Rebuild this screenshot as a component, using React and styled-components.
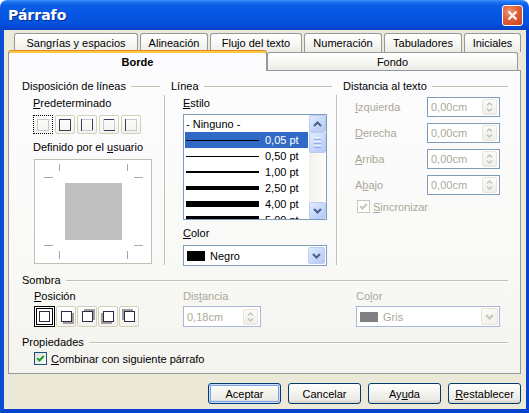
import React from "react";
import styled, { createGlobalStyle, css } from "styled-components";

const Global = createGlobalStyle`
  html, body { margin: 0; padding: 0; background: #ffffff; }
  body { font-family: "Liberation Sans", Arial, sans-serif; font-size: 11px; color: #000; }
  * { box-sizing: border-box; }
`;

const Window = styled.div`
  position: relative;
  width: 529px;
  height: 413px;
  display: flex;
  flex-direction: column;
  border-radius: 7px 7px 0 0;
  overflow: hidden;
`;

const TitleBar = styled.div`
  height: 30px;
  flex: none;
  display: flex;
  align-items: center;
  justify-content: space-between;
  padding: 0 6px 0 8px;
  background: linear-gradient(to bottom, #3d90fa 0px, #2276f2 2px, #0a5ee6 5px, #0657e3 14px, #0553df 22px, #0448d3 27px, #0a3fc4 30px);
`;

const Title = styled.div`
  font-family: "DejaVu Sans", Verdana, sans-serif;
  font-weight: bold;
  font-size: 14px;
  color: #fff;
  text-shadow: 1px 1px 0 #0a2f8c;
`;

const CloseButton = styled.div`
  width: 21px;
  height: 21px;
  border: 1px solid #fff;
  border-radius: 3px;
  background: radial-gradient(circle at 35% 30%, #f29a78 0%, #e2643c 40%, #c8401a 100%);
  display: flex;
  align-items: center;
  justify-content: center;
`;

const Frame = styled.div`
  flex: 1;
  display: flex;
  border-left: 4px solid #0a4ed8;
  border-right: 4px solid #0642cc;
  border-bottom: 4px solid #0642cc;
`;

const Body = styled.div`
  flex: 1;
  display: flex;
  flex-direction: column;
  background: #ece9d8;
  padding: 3px 5px 5px 4px;
`;

const TabRow = styled.div`
  display: flex;
  height: ${(p) => p.$h}px;
  padding-left: ${(p) => p.$indent}px;
  gap: ${(p) => p.$gap}px;
  align-items: flex-end;
  position: relative;
  z-index: ${(p) => p.$z};
`;

const Tab = styled.div`
  width: ${(p) => p.$w}px;
  height: 100%;
  border: 1px solid #919b9c;
  border-bottom: none;
  border-radius: 3px 3px 0 0;
  background: linear-gradient(to bottom, #ffffff 0%, #f7f7f4 50%, #ecebe5 100%);
  display: flex;
  align-items: center;
  justify-content: center;
  white-space: nowrap;
  ${(p) =>
    p.$active &&
    css`
      height: calc(100% + 3px);
      margin-top: -2px;
      margin-bottom: -1px;
      background: #fcfcfe;
      border-top: 1px solid #e68b2c;
      box-shadow: inset 0 2px 0 #ffc73c;
      font-weight: bold;
      padding-top: 1px;
    `}
`;

const Panel = styled.div`
  height: 304px;
  border: 1px solid #919b9c;
  background: linear-gradient(to bottom, #fcfcfe 0%, #f9f9f7 60%, #f4f3ee 100%);
  padding: 9px 12px 0 13px;
  display: flex;
  flex-direction: column;
  position: relative;
  z-index: 1;
`;

const SectionHead = styled.div`
  display: flex;
  align-items: center;
  height: 13px;
  line-height: 13px;
  white-space: nowrap;
  margin-top: ${(p) => p.$mt || 0}px;
  &::after {
    content: "";
    flex: 1;
    margin-left: 5px;
    border-top: 1px solid #c3c1b4;
    border-bottom: 1px solid #ffffff;
  }
`;

const TopGrid = styled.div`
  display: grid;
  grid-template-columns: 138px 11px 161px 11px 1fr;
`;

const VSep = styled.div`
  margin: 15px 0 1px 4px;
  width: 2px;
  border-left: 1px solid #c3c1b4;
  border-right: 1px solid #ffffff;
`;

const Column = styled.div`
  display: flex;
  flex-direction: column;
  align-items: flex-start;
`;

const Label = styled.div`
  height: 13px;
  line-height: 13px;
  white-space: nowrap;
  margin: ${(p) => p.$mt || 0}px 0 0 ${(p) => p.$ml || 0}px;
  color: ${(p) => (p.$disabled ? "#aca899" : "#000")};
`;

const U = styled.span`
  text-decoration: underline;
  text-underline-offset: 1px;
`;

const TileRow = styled.div`
  display: flex;
  gap: ${(p) => p.$gap}px;
  margin: ${(p) => p.$mt}px 0 0 ${(p) => p.$ml}px;
`;

const Tile = styled.div`
  width: ${(p) => p.$w}px;
  height: ${(p) => p.$h}px;
  border: 1px solid #d3cfbb;
  border-radius: 2px;
  background: linear-gradient(to bottom, #ffffff, #f3f2ec);
  display: flex;
  align-items: center;
  justify-content: center;
  ${(p) =>
    p.$focus &&
    css`
      border: 1px dotted #000;
      border-radius: 0;
    `}
  ${(p) =>
    p.$selected &&
    css`
      border: 1px solid #000;
      border-radius: 0;
      background: #fff;
      box-shadow: inset 0 0 0 1px #fff, inset 0 0 0 2px #000;
    `}
`;

const UserBox = styled.div`
  width: 118px;
  height: 105px;
  margin: 5px 0 0 1px;
  border: 1px solid #c2c0b3;
  background: #ffffff;
  display: flex;
`;

const ListBox = styled.div`
  width: 144px;
  height: 106px;
  margin: 4px 0 0 12px;
  border: 1px solid #7f9db9;
  background: #fff;
  display: flex;
  overflow: hidden;
`;

const ListArea = styled.div`
  flex: 1;
  padding: 1px;
  overflow: hidden;
`;

const ListRow = styled.div`
  height: 16px;
  display: flex;
  align-items: center;
  padding-left: 1px;
  white-space: nowrap;
  background: ${(p) => (p.$sel ? "#316ac5" : "transparent")};
  color: ${(p) => (p.$sel ? "#fff" : "#000")};
`;

const LineSample = styled.span`
  width: 73px;
  height: ${(p) => p.$t}px;
  background: #000;
  margin-right: 6px;
  flex: none;
`;

const ScrollBar = styled.div`
  width: 17px;
  display: flex;
  flex-direction: column;
  background: linear-gradient(to right, #f3f1ec, #fefefb);
`;

const ScrollBtn = styled.div`
  width: 17px;
  height: ${(p) => p.$h || 17}px;
  border: 1px solid #b8cbf3;
  border-radius: 2px;
  background: linear-gradient(135deg, #e3ecfe 0%, #c9d9fb 50%, #b5c9f5 100%);
  display: flex;
  flex-direction: column;
  align-items: center;
  justify-content: center;
  gap: 1px;
  flex: none;
  ${(p) =>
    p.$disabled &&
    css`
      border-color: #e6e4da;
      background: linear-gradient(135deg, #fbfbf8 0%, #f1f0ea 100%);
    `}
`;

const Spacer = styled.div`
  flex: 1;
`;

const Grip = styled.span`
  width: 7px;
  height: 1px;
  background: ${(p) => (p.$light ? "#eef4fe" : "#8cacee")};
`;

const Combo = styled.div`
  width: ${(p) => p.$w}px;
  height: 21px;
  margin: ${(p) => p.$mt || 0}px 0 0 ${(p) => p.$ml || 0}px;
  border: 1px solid ${(p) => (p.$disabled ? "#a9b8d4" : "#7f9db9")};
  background: #fff;
  display: flex;
  align-items: center;
  padding: 1px 1px 1px 3px;
  gap: 5px;
  color: ${(p) => (p.$disabled ? "#aca899" : "#000")};
`;

const Swatch = styled.span`
  width: 18px;
  height: 10px;
  background: ${(p) => p.$c};
  flex: none;
`;

const Grow = styled.span`
  flex: 1;
  white-space: nowrap;
`;

const FieldList = styled.div`
  display: flex;
  flex-direction: column;
  gap: 6px;
  margin-top: 4px;
`;

const FieldRow = styled.div`
  display: flex;
  align-items: center;
  height: 20px;
`;

const FieldLabel = styled.span`
  width: 72px;
  margin-left: 12px;
  color: #aca899;
  white-space: nowrap;
`;

const SpinField = styled.div`
  width: ${(p) => p.$w}px;
  height: ${(p) => p.$h || 20}px;
  border: 1px solid ${(p) => (p.$soft ? "#a9b8d4" : "#7f9db9")};
  background: #fff;
  display: flex;
  align-items: center;
  padding: 0 2px 0 3px;
  color: #aca899;
`;

const SpinBox = styled.div`
  width: 15px;
  height: 16px;
  border: 1px solid #e8e6dc;
  border-radius: 2px;
  background: linear-gradient(to bottom, #fbfbf9, #efeee8);
  display: flex;
  flex-direction: column;
  align-items: center;
  justify-content: center;
  gap: 2px;
`;

const CheckRow = styled.div`
  display: flex;
  align-items: center;
  height: 13px;
  margin: ${(p) => p.$mt}px 0 0 ${(p) => p.$ml}px;
  gap: ${(p) => p.$gap}px;
  color: ${(p) => (p.$disabled ? "#aca899" : "#000")};
  white-space: nowrap;
`;

const CheckBox = styled.span`
  width: 13px;
  height: 13px;
  flex: none;
  border: 1px solid ${(p) => (p.$disabled ? "#cac8bb" : "#1c5180")};
  background: ${(p) => (p.$disabled ? "#ffffff" : "linear-gradient(135deg, #dcdcd7 0%, #ffffff 100%)")};
  display: flex;
  align-items: center;
  justify-content: center;
`;

const ShadowGrid = styled.div`
  display: grid;
  grid-template-columns: 149px 173px 1fr;
  margin: 3px 0 0 12px;
`;

const ShadowCol = styled.div`
  display: flex;
  flex-direction: column;
  align-items: flex-start;
  gap: 3px;
`;

const ButtonRow = styled.div`
  display: flex;
  justify-content: flex-end;
  gap: 7px;
  margin-top: 9px;
`;

const Button = styled.div`
  width: 73px;
  height: 21px;
  border: 1px solid #003c74;
  border-radius: 3px;
  background: linear-gradient(to bottom, #ffffff 0%, #f5f5f1 40%, #ecebe6 80%, #d6d0c5 100%);
  display: flex;
  align-items: center;
  justify-content: center;
  ${(p) =>
    p.$default &&
    css`
      box-shadow: inset 0 0 0 1px #c9defc, inset 0 0 0 2px #7ea3ea;
    `}
`;

const Cursor = styled.svg`
  position: absolute;
  left: 411px;
  top: 86px;
`;

const Chevron = ({ dir = "up", color = "#4d6185" }) => (
  <svg width="9" height="6" viewBox="0 0 9 6">
    <path
      d={dir === "up" ? "M1 5 L4.5 1.5 L8 5" : "M1 1 L4.5 4.5 L8 1"}
      stroke={color}
      strokeWidth="2"
      fill="none"
    />
  </svg>
);

const SmallArrow = ({ dir }) => (
  <svg width="7" height="4" viewBox="0 0 7 4">
    <path d={dir === "up" ? "M1 3.5 L3.5 1 L6 3.5" : "M1 0.5 L3.5 3 L6 0.5"} stroke="#c4c2b6" strokeWidth="1.4" fill="none" />
  </svg>
);

const Check = ({ color }) => (
  <svg width="9" height="9" viewBox="0 0 9 9">
    <path d="M1.2 4.2 L3.5 6.5 L7.8 2" stroke={color} strokeWidth="2" fill="none" />
  </svg>
);

const PresetIcon = ({ sides }) => {
  const dark = "#3c3c58";
  const light = "#c9c9d6";
  const [t, r, b, l] = sides;
  return (
    <svg width="12" height="12" viewBox="0 0 12 12">
      <line x1="0" y1="0.5" x2="12" y2="0.5" stroke={t ? dark : light} />
      <line x1="11.5" y1="0" x2="11.5" y2="12" stroke={r ? dark : light} />
      <line x1="0" y1="11.5" x2="12" y2="11.5" stroke={b ? dark : light} />
      <line x1="0.5" y1="0" x2="0.5" y2="12" stroke={l ? dark : light} />
    </svg>
  );
};

const ShadowIcon = ({ dx, dy }) => {
  const sx = 2 + dx;
  const sy = 2 + dy;
  return (
    <svg width="15" height="15" viewBox="0 0 15 15">
      {(dx !== 0 || dy !== 0) && <rect x={sx} y={sy} width="11" height="11" fill="#9c9c9c" />}
      <rect x="2.5" y="2.5" width="10" height="10" fill="#ffffff" stroke="#2b2b44" />
    </svg>
  );
};

const UserPreview = () => (
  <svg width="116" height="103" viewBox="0 0 116 103">
    <rect x="30" y="23" width="57" height="57" fill="#c0c0c0" />
    <g stroke="#a8a8a8" strokeWidth="1">
      <line x1="24.5" y1="4" x2="24.5" y2="11" />
      <line x1="92.5" y1="4" x2="92.5" y2="11" />
      <line x1="24.5" y1="91" x2="24.5" y2="99" />
      <line x1="92.5" y1="91" x2="92.5" y2="99" />
      <line x1="9" y1="17.5" x2="18" y2="17.5" />
      <line x1="99" y1="17.5" x2="108" y2="17.5" />
      <line x1="9" y1="85.5" x2="18" y2="85.5" />
      <line x1="99" y1="85.5" x2="108" y2="85.5" />
    </g>
  </svg>
);

const lineRows = [
  { t: 1, label: "0,05 pt", sel: true },
  { t: 1, label: "0,50 pt" },
  { t: 2, label: "1,00 pt" },
  { t: 4, label: "2,50 pt" },
  { t: 6, label: "4,00 pt" },
  { t: 8, label: "5,00 pt" },
];

const presets = [
  { sides: [0, 0, 0, 0], focus: true },
  { sides: [1, 1, 1, 1] },
  { sides: [0, 1, 0, 1] },
  { sides: [1, 0, 1, 0] },
  { sides: [0, 0, 0, 1] },
];

const shadows = [
  { dx: 0, dy: 0, selected: true, w: 21 },
  { dx: 2, dy: 2, w: 20 },
  { dx: 2, dy: -2, w: 20 },
  { dx: -2, dy: 2, w: 20 },
  { dx: -2, dy: -2, w: 20 },
];

const distances = [
  { k: "I", rest: "zquierda" },
  { k: "D", rest: "erecha" },
  { k: "A", rest: "rriba" },
  { pre: "A", k: "b", rest: "ajo" },
];

export default function App() {
  return (
    <>
      <Global />
      <Window>
        <TitleBar>
          <Title>Párrafo</Title>
          <CloseButton>
            <svg width="11" height="11" viewBox="0 0 11 11">
              <path d="M1.5 1.5 L9.5 9.5 M9.5 1.5 L1.5 9.5" stroke="#fff" strokeWidth="2.2" />
            </svg>
          </CloseButton>
        </TitleBar>
        <Frame>
          <Body>
            <TabRow $h={19} $indent={6} $gap={2} $z={0}>
              <Tab $w={124}>Sangrías y espacios</Tab>
              <Tab $w={68}>Alineación</Tab>
              <Tab $w={92}>Flujo del texto</Tab>
              <Tab $w={78}>Numeración</Tab>
              <Tab $w={78}>Tabuladores</Tab>
              <Tab $w={57}>Iniciales</Tab>
            </TabRow>
            <TabRow $h={18} $indent={0} $gap={0} $z={2}>
              <Tab $w={259} $active>Borde</Tab>
              <Tab $w={251}>Fondo</Tab>
            </TabRow>
            <Panel>
              <TopGrid>
                <Column>
                  <SectionHead style={{ alignSelf: "stretch" }}>Disposición de líneas</SectionHead>
                  <Label $mt={4} $ml={11}>
                    <U>P</U>redeterminado
                  </Label>
                  <TileRow $gap={2} $mt={5} $ml={11}>
                    {presets.map((p, i) => (
                      <Tile key={i} $w={20} $h={19} $focus={p.focus}>
                        <PresetIcon sides={p.sides} />
                      </Tile>
                    ))}
                  </TileRow>
                  <Label $mt={7} $ml={11}>
                    Definido por el <U>u</U>suario
                  </Label>
                  <TileRow $gap={0} $mt={0} $ml={11}>
                    <UserBox>
                      <UserPreview />
                    </UserBox>
                  </TileRow>
                </Column>
                <VSep />
                <Column>
                  <SectionHead style={{ alignSelf: "stretch" }}>Línea</SectionHead>
                  <Label $mt={4} $ml={12}>
                    <U>E</U>stilo
                  </Label>
                  <ListBox>
                    <ListArea>
                      <ListRow>- Ninguno -</ListRow>
                      {lineRows.map((r) => (
                        <ListRow key={r.label} $sel={r.sel}>
                          <LineSample $t={r.t} />
                          {r.label}
                        </ListRow>
                      ))}
                    </ListArea>
                    <ScrollBar>
                      <ScrollBtn>
                        <Chevron dir="up" />
                      </ScrollBtn>
                      <ScrollBtn $h={21}>
                        <Grip $light />
                        <Grip />
                        <Grip $light />
                        <Grip />
                        <Grip $light />
                        <Grip />
                      </ScrollBtn>
                      <Spacer />
                      <ScrollBtn>
                        <Chevron dir="down" />
                      </ScrollBtn>
                    </ScrollBar>
                  </ListBox>
                  <Label $mt={7} $ml={12}>
                    <U>C</U>olor
                  </Label>
                  <Combo $w={144} $mt={5} $ml={12}>
                    <Swatch $c="#000" />
                    <Grow>Negro</Grow>
                    <ScrollBtn>
                      <Chevron dir="down" />
                    </ScrollBtn>
                  </Combo>
                </Column>
                <VSep />
                <Column>
                  <SectionHead style={{ alignSelf: "stretch" }}>Distancia al texto</SectionHead>
                  <FieldList>
                    {distances.map((d, i) => (
                      <FieldRow key={i}>
                        <FieldLabel>
                          {d.pre}
                          <U>{d.k}</U>
                          {d.rest}
                        </FieldLabel>
                        <SpinField $w={73}>
                          <Grow>0,00cm</Grow>
                          <SpinBox>
                            <SmallArrow dir="up" />
                            <SmallArrow dir="down" />
                          </SpinBox>
                        </SpinField>
                      </FieldRow>
                    ))}
                  </FieldList>
                  <CheckRow $mt={5} $ml={14} $gap={3} $disabled>
                    <CheckBox $disabled>
                      <Check color="#c6c4b8" />
                    </CheckBox>
                    <span>
                      <U>S</U>incronizar
                    </span>
                  </CheckRow>
                </Column>
              </TopGrid>

              <SectionHead $mt={8}>Sombra</SectionHead>
              <ShadowGrid>
                <ShadowCol>
                  <Label>
                    <U>P</U>osición
                  </Label>
                  <TileRow $gap={1} $mt={0} $ml={0}>
                    {shadows.map((s, i) => (
                      <Tile key={i} $w={s.w} $h={21} $selected={s.selected}>
                        <ShadowIcon dx={s.dx} dy={s.dy} />
                      </Tile>
                    ))}
                  </TileRow>
                </ShadowCol>
                <ShadowCol>
                  <Label $disabled>
                    Dis<U>t</U>ancia
                  </Label>
                  <SpinField $w={78} $h={21} $soft>
                    <Grow>0,18cm</Grow>
                    <SpinBox>
                      <SmallArrow dir="up" />
                      <SmallArrow dir="down" />
                    </SpinBox>
                  </SpinField>
                </ShadowCol>
                <ShadowCol>
                  <Label $disabled>
                    Co<U>l</U>or
                  </Label>
                  <Combo $w={144} $disabled>
                    <Swatch $c="#808080" />
                    <Grow>Gris</Grow>
                    <ScrollBtn $disabled>
                      <Chevron dir="down" color="#c9c7bb" />
                    </ScrollBtn>
                  </Combo>
                </ShadowCol>
              </ShadowGrid>

              <SectionHead $mt={9}>Propiedades</SectionHead>
              <CheckRow $mt={3} $ml={12} $gap={4}>
                <CheckBox>
                  <Check color="#21a121" />
                </CheckBox>
                <span>
                  <U>C</U>ombinar con siguiente párrafo
                </span>
              </CheckRow>
            </Panel>
            <ButtonRow>
              <Button $default>Aceptar</Button>
              <Button>Cancelar</Button>
              <Button>
                Ay<U>u</U>da
              </Button>
              <Button>
                <U>R</U>establecer
              </Button>
            </ButtonRow>
          </Body>
        </Frame>
        <Cursor width="13" height="20" viewBox="0 0 13 20">
          <path d="M0.5 0.5 L0.5 16.5 L4.5 12.8 L7.2 19 L9.6 18 L7 11.8 L12 11.8 Z" fill="#fff" stroke="#000" strokeWidth="1" strokeLinejoin="round" />
        </Cursor>
      </Window>
    </>
  );
}
